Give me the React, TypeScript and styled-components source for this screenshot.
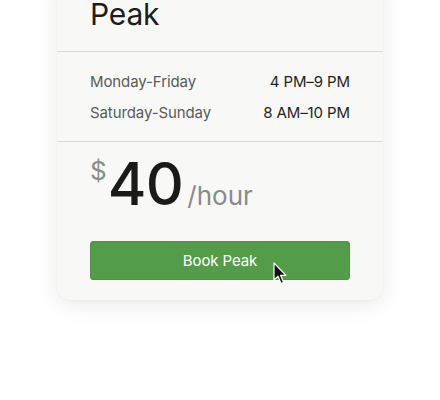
import styled, { createGlobalStyle } from 'styled-components';

const GlobalStyle = createGlobalStyle`
  html, body {
    margin: 0;
    padding: 0;
    background: #ffffff;
    font-family: Inter, "Liberation Sans", sans-serif;
    -webkit-font-smoothing: antialiased;
  }
`;

const Page = styled.div`
  width: 440px;
  height: 400px;
  overflow: hidden;
  padding-left: 57px;
  box-sizing: border-box;
`;

const Card = styled.div`
  width: 326px;
  margin-top: -28px;
  background: #f8f9f7;
  border-radius: 14px;
  box-shadow: 0 6px 22px rgba(0, 0, 0, 0.08), 0 1px 3px rgba(0, 0, 0, 0.04);
  overflow: hidden;
`;

const Section = styled.div<{ $divider?: boolean }>`
  padding: 0 33px;
  border-top: ${(props) => (props.$divider ? '1px solid #d9dbd8' : 'none')};
`;

const Header = styled(Section)`
  padding-top: 28px;
  padding-bottom: 23px;
`;

const Title = styled.h2`
  margin: 0;
  font-size: 30px;
  line-height: 28px;
  font-weight: 400;
  color: #1c1c1c;
  letter-spacing: -0.2px;
`;

const Hours = styled(Section)`
  display: flex;
  flex-direction: column;
  gap: 11px;
  padding-top: 20px;
  padding-bottom: 18px;
`;

const HourRow = styled.div`
  display: flex;
  justify-content: space-between;
  font-size: 15px;
  line-height: 20px;
`;

const Days = styled.span`
  color: #5a5a5a;
  letter-spacing: -0.1px;
`;

const Time = styled.span`
  color: #1f1f1f;
  letter-spacing: -0.1px;
`;

const PriceSection = styled(Section)`
  padding-top: 13px;
  padding-bottom: 20px;
`;

const PriceRow = styled.div`
  display: flex;
  align-items: baseline;
`;

const Currency = styled.span`
  align-self: flex-start;
  margin-top: 3px;
  font-size: 26px;
  line-height: 26px;
  color: #8c8c8c;
`;

const Amount = styled.span`
  margin-left: 1px;
  font-size: 59px;
  line-height: 58px;
  font-weight: 500;
  color: #1a1a1a;
  letter-spacing: -0.6px;
`;

const Unit = styled.span`
  margin-left: 4px;
  font-size: 26px;
  color: #8a8a8a;
`;

const Button = styled.button`
  position: relative;
  margin-top: 28px;
  width: 100%;
  height: 39px;
  display: flex;
  align-items: center;
  justify-content: center;
  background: #529c4a;
  border: 1px solid #4b9244;
  border-radius: 3px;
  color: #ffffff;
  font-family: inherit;
  font-size: 15px;
  letter-spacing: -0.1px;
  padding: 0;
`;

const Cursor = styled.svg`
  position: absolute;
  left: 182px;
  top: 20px;
`;

export default function App() {
  return (
    <>
      <GlobalStyle />
      <Page>
        <Card>
          <Header>
            <Title>Peak</Title>
          </Header>
          <Hours $divider>
            <HourRow>
              <Days>Monday-Friday</Days>
              <Time>4 PM–9 PM</Time>
            </HourRow>
            <HourRow>
              <Days>Saturday-Sunday</Days>
              <Time>8 AM–10 PM</Time>
            </HourRow>
          </Hours>
          <PriceSection $divider>
            <PriceRow>
              <Currency>$</Currency>
              <Amount>40</Amount>
              <Unit>/hour</Unit>
            </PriceRow>
            <Button>
              Book Peak
              <Cursor width="14" height="24" viewBox="0 0 14 24">
                <path
                  d="M1 1 L1 18 L5 14.2 L8 21.5 L10.6 20.4 L7.6 13.3 L13 13.3 Z"
                  fill="#111"
                  stroke="#fff"
                  strokeWidth="1.2"
                  strokeLinejoin="round"
                />
              </Cursor>
            </Button>
          </PriceSection>
        </Card>
      </Page>
    </>
  );
}
